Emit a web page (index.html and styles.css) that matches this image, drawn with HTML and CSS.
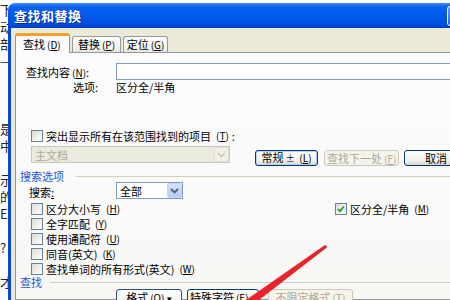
FILE: index.html
```html
<!doctype html>
<html lang="zh-CN">
<head>
	<meta charset="utf-8">
	<title>查找和替换</title>
<link rel="stylesheet" href="styles.css">
</head>
<body>
<div class="desk">
	<div class="doc">
		<div>下</div><div>动</div><div>部</div><div>—</div><div>&nbsp;</div><div>&nbsp;</div><div>&nbsp;</div>
		<div>是</div><div>中</div><div>&nbsp;</div><div>示</div><div>的</div><div>E.</div><div>&nbsp;</div>
		<div>?</div><div>&nbsp;</div><div>才</div>
	</div>

	<div class="window">
		<div class="titlebar">
			<span class="title">查找和替换</span>
			<span class="tb-btn"></span>
		</div>
		<div class="frame">
			<div class="tabs">
				<div class="tab active">查找<span class="acc">(<u>D</u>)</span></div>
				<div class="tab t2">替换<span class="acc">(<u>P</u>)</span></div>
				<div class="tab t3">定位<span class="acc">(<u>G</u>)</span></div>
			</div>
			<div class="panel">
				<div class="find-row">
					<span class="lbl find-lbl">查找内容<span class="acc">(<u>N</u>)</span>:</span>
					<div class="input"></div>
				</div>
				<div class="opts-row">
					<span class="lbl opts-lbl">选项:</span>
					<span>区分全/半角</span>
				</div>

				<div class="check hl"><span class="box"></span>突出显示所有在该范围找到的项目<span class="acc">(<u>T</u>)</span>:</div>

				<div class="scope-row">
					<div class="combo disabled">主文档<span class="arrow"><svg width="9" height="6" viewBox="0 0 9 6"><path d="M1 1l3.5 3.5L8 1" fill="none" stroke="#c9c7ba" stroke-width="1.6"/></svg></span></div>
					<button class="btn b-less">常规 <span class="sym">±</span> <span class="acc">(<u>L</u>)</span></button>
					<button class="btn b-next" disabled>查找下一处<span class="acc">(<u>F</u>)</span></button>
					<button class="btn b-cancel">取消</button>
				</div>

				<div class="section s-opts"><span>搜索选项</span><i></i></div>

				<div class="search-row">
					<span class="lbl search-lbl">搜索<u>:</u></span>
					<div class="combo c-all">全部<span class="arrow"><svg width="9" height="6" viewBox="0 0 9 6"><path d="M1 1l3.5 3.5L8 1" fill="none" stroke="#4d6185" stroke-width="1.8"/></svg></span></div>
				</div>

				<div class="checks">
					<div class="col-left">
						<div class="check"><span class="box"></span>区分大小写<span class="acc">(<u>H</u>)</span></div>
						<div class="check"><span class="box"></span>全字匹配<span class="acc">(<u>Y</u>)</span></div>
						<div class="check"><span class="box"></span>使用通配符<span class="acc">(<u>U</u>)</span></div>
						<div class="check"><span class="box"></span>同音(英文)<span class="acc">(<u>K</u>)</span></div>
						<div class="check"><span class="box"></span>查找单词的所有形式(英文)<span class="acc">(<u>W</u>)</span></div>
					</div>
					<div class="col-right">
						<div class="check"><span class="box on"><svg width="10" height="10" viewBox="0 0 10 10"><path d="M2 5l2 2.2L8 2.5" fill="none" stroke="#21a121" stroke-width="1.8"/></svg></span>区分全/半角<span class="acc">(<u>M</u>)</span></div>
					</div>
				</div>

				<div class="section s-find"><span>查找</span><i></i></div>

				<div class="bottom-row">
					<button class="btn b-format">格式<span class="acc">(<u>O</u>)</span> <span class="tri">▾</span></button>
					<button class="btn b-special">特殊字符<span class="acc">(<u>E</u>)</span> <span class="tri">▾</span></button>
					<button class="btn b-nofmt" disabled>不限定格式<span class="acc">(<u>T</u>)</span></button>
				</div>
			</div>
		</div>
	</div>
</div>

<svg class="arrow-mark" width="450" height="300" viewBox="0 0 450 300">
	<polygon points="325,245 327.5,247 259,300 246,300" fill="#e8232b"/>
</svg>
</body>
</html>
```

FILE: styles.css
```css
* {
	box-sizing: border-box;
}

body {
	margin: 0;
	width: 450px;
	height: 300px;
	overflow: hidden;
	background: #fff;
	color: #000;
	font-family: "Noto Sans CJK SC", "Liberation Sans", sans-serif;
	font-size: 11px;
}

u {
	text-decoration: underline;
	text-underline-offset: 1px;
}

.acc {
	margin-left: 2px;
	font-size: 10px;
}

.desk {
	display: flex;
	height: 300px;
}

/* document text peeking out behind the dialog */
.doc {
	flex: none;
	width: 8px;
	overflow: hidden;
	white-space: nowrap;
	font-size: 13px;
	line-height: 17px;
	padding-top: 1px;
	color: #222;
}

.window {
	flex: none;
	width: 460px;
	margin-top: 3px;
}

.titlebar {
	height: 25px;
	display: flex;
	align-items: center;
	padding-left: 6px;
	border-top-left-radius: 7px;
	background: linear-gradient(#3d8dfb, #0a62f2 15%, #0058e8 55%, #0050dc 85%, #003fc4);
}

.title {
	color: #fff;
	font-weight: bold;
	font-size: 13px;
	letter-spacing: 0.5px;
	text-shadow: 1px 1px #0a2a8a;
}

.tb-btn {
	margin-left: auto;
	width: 21px;
	height: 20px;
	border: 1px solid #fff;
	border-radius: 3px;
	background: linear-gradient(#6a9cf5, #2c66e0);
}

.frame {
	height: 272px;
	background: #ece9d8;
	border-left: 3px solid #0846d6;
	padding-left: 4px;
}

.tabs {
	display: flex;
	align-items: flex-end;
	height: 24px;
	gap: 2px;
}

.tab {
	height: 16px;
	line-height: 15px;
	border: 1px solid #919b9c;
	border-bottom: none;
	border-radius: 3px 3px 0 0;
	background: linear-gradient(#fff, #f3f2ec 70%, #e6e4dc);
	text-align: center;
}

.tab.active {
	width: 55px;
	height: 20px;
	line-height: 16px;
	margin-bottom: -1px;
	position: relative;
	border-top: 3px solid #f0a22c;
	background: #fcfcfe;
	text-align: left;
	padding-left: 7px;
}

.tab.t2 {
	width: 49px;
}

.tab.t3 {
	width: 45px;
}

.panel {
	height: 248px;
	border: 1px solid #919b9c;
	border-right: none;
	background: linear-gradient(#fcfcfe, #f7f7f4);
}

.lbl {
	flex: none;
	width: 100px;
}

.find-row {
	display: flex;
	align-items: center;
	height: 17px;
	margin-top: 10px;
}

.find-lbl {
	padding-left: 10px;
}

.input {
	flex: 1;
	height: 17px;
	background: #fff;
	border: 1px solid #7f9db9;
}

.opts-row {
	display: flex;
	height: 14px;
	line-height: 14px;
}

.opts-lbl {
	padding-left: 57px;
}

.check {
	display: flex;
	align-items: center;
	height: 15px;
	gap: 3px;
	white-space: nowrap;
}

.box {
	flex: none;
	width: 12px;
	height: 12px;
	border: 1px solid #6a8096;
	background: linear-gradient(135deg, #dcdcd7, #fff);
	display: flex;
	align-items: center;
	justify-content: center;
}

.check.hl {
	margin-top: 34px;
	padding-left: 15px;
}

.scope-row {
	display: flex;
	align-items: flex-start;
	height: 20px;
	margin-top: 3px;
}

.combo {
	display: flex;
	align-items: center;
	height: 17px;
	padding-left: 3px;
	background: #fff;
	border: 1px solid #7f9db9;
}

.combo .arrow {
	margin-left: auto;
	width: 15px;
	height: 15px;
	display: flex;
	align-items: center;
	justify-content: center;
	border-radius: 2px;
	background: linear-gradient(#d6e3fd, #b4c9f6);
	border: 1px solid #c3d3fd;
}

.combo.disabled {
	width: 202px;
	margin-left: 15px;
	color: #aca899;
	background: #ebeadf;
	border-color: #c9c7ba;
}

.combo.disabled .arrow {
	background: #f1efe6;
	border-color: #e1ded2;
}

.btn {
	height: 16px;
	padding: 0;
	font: inherit;
	color: #000;
	border: 1px solid #003c74;
	border-radius: 3px;
	background: linear-gradient(#fff, #f2f1ec 70%, #d8d4c8);
	line-height: 13px;
	white-space: nowrap;
}

.btn:disabled {
	color: #aca899;
	border-color: #c9c7ba;
	background: #f5f4ea;
}

.b-less {
	width: 65px;
	margin-left: 25px;
	margin-top: 4px;
	box-shadow: inset 0 0 0 1px #b8d0f0;
}

.sym {
	font-size: 9px;
}

.b-next {
	width: 76px;
	margin-left: 6px;
	margin-top: 4px;
}

.b-cancel {
	width: 65px;
	margin-left: 5px;
	margin-top: 4px;
}

.section {
	display: flex;
	align-items: center;
	height: 12px;
	margin-top: 4px;
	padding-left: 4px;
	color: #2356d8;
}

.section i {
	flex: 1;
	height: 1px;
	margin-left: 12px;
	background: #d0d0bf;
}

.s-find {
	margin-top: 0;
}

.s-find i {
	margin-left: 8px;
}

.search-row {
	display: flex;
	align-items: center;
	height: 17px;
}

.search-lbl {
	padding-left: 13px;
	padding-top: 2px;
}

.c-all {
	width: 67px;
}

.checks {
	display: flex;
	margin-top: 2px;
}

.col-left {
	width: 319px;
	padding-left: 15px;
}

.bottom-row {
	display: flex;
	margin-top: 1px;
	padding-left: 100px;
}

.b-format {
	width: 66px;
	height: 17px;
	border-color: #2b4d78;
}

.b-special {
	width: 72px;
	height: 17px;
	margin-left: 5px;
}

.b-nofmt {
	width: 85px;
	height: 17px;
	margin-left: 9px;
}

.tri {
	font-size: 9px;
}

.arrow-mark {
	position: absolute;
	left: 0;
	top: 0;
	pointer-events: none;
}
```
